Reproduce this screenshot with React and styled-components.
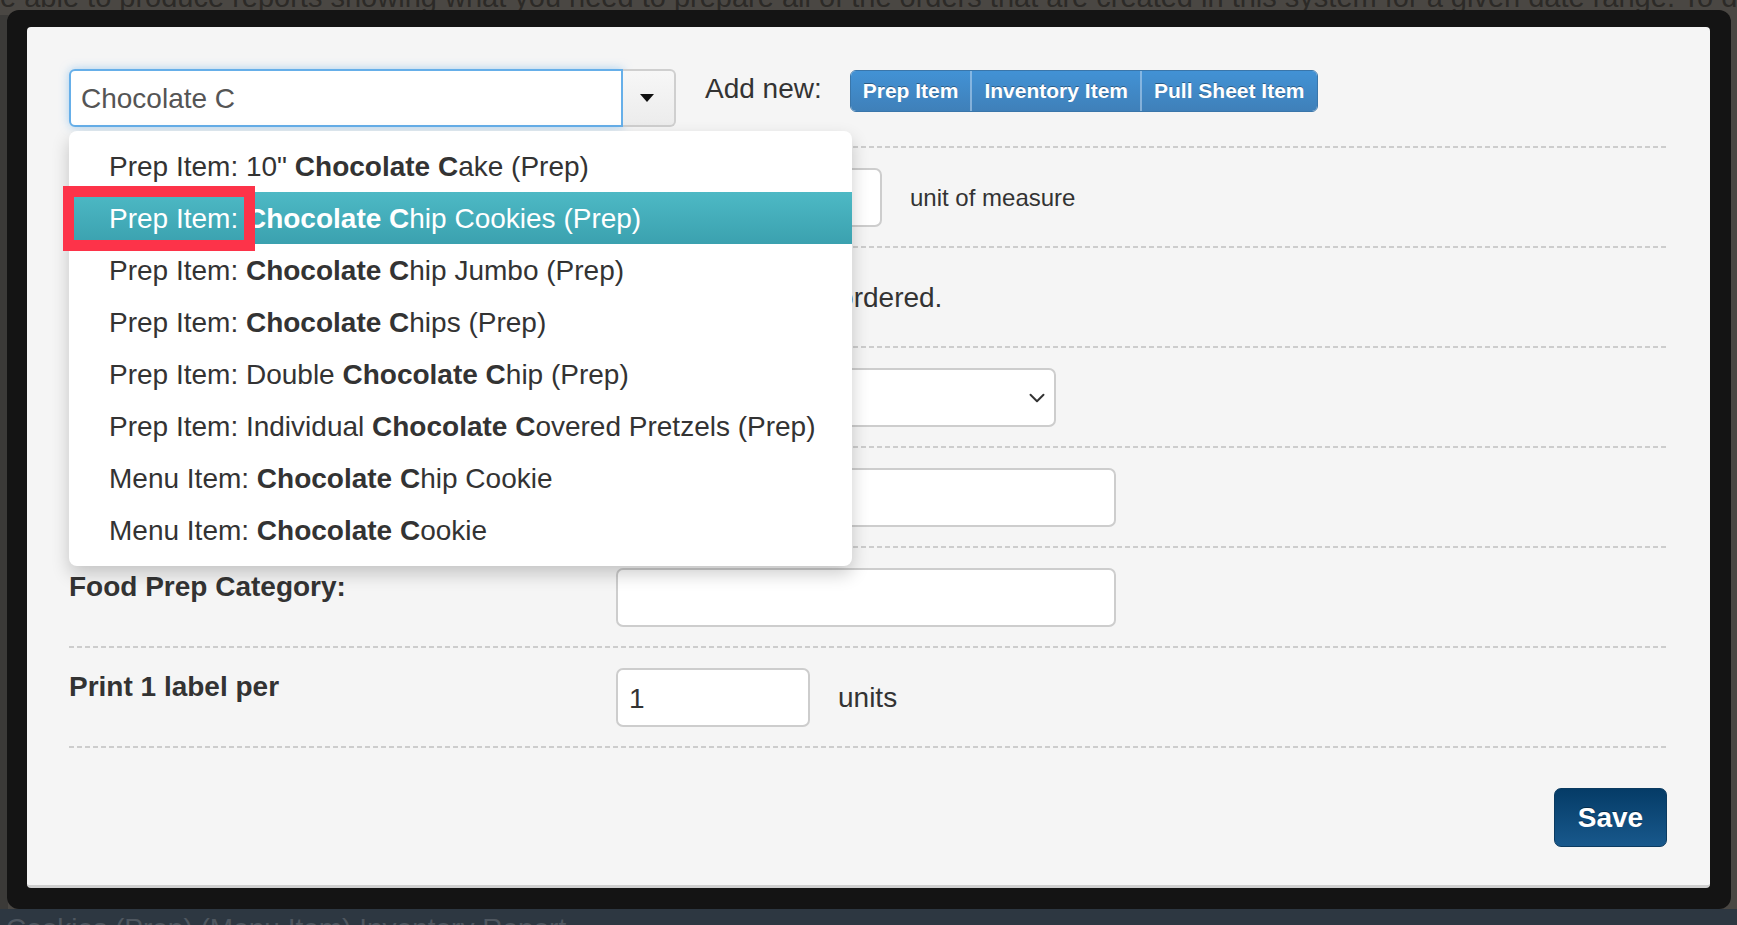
import React from "react";
import styled, { createGlobalStyle } from "styled-components";
import { ChevronDown } from "lucide-react";

const GlobalStyle = createGlobalStyle`
  * { box-sizing: border-box; }
  body {
    margin: 0;
    font-family: "Liberation Sans", Helvetica, Arial, sans-serif;
    background: #3e3c39;
  }
`;

const Page = styled.div`
  position: relative;
  width: 1737px;
  height: 925px;
  overflow: hidden;
  display: flex;
  flex-direction: column;
  background: #4a4743;
`;

const BackText = styled.p`
  margin: -21px 0 0 0;
  font-size: 29px;
  line-height: 36px;
  color: #2c2a27;
  white-space: nowrap;
`;

const Spacer = styled.div`
  flex: 1;
  background: linear-gradient(to right, #3b3a38 0 8px, transparent 8px);
`;

const BottomBar = styled.div`
  height: 16px;
  background: #2d3741;
  color: #4f5760;
  font-size: 28px;
  line-height: 40px;
  padding-left: 6px;
  overflow: hidden;
  white-space: nowrap;
`;

const Frame = styled.div`
  position: absolute;
  left: 7px;
  top: 10px;
  width: 1724px;
  height: 899px;
  background: #141414;
  border-radius: 12px;
  padding: 17px 21px 21px 20px;
`;

const Panel = styled.div`
  height: 100%;
  background: #f5f5f5;
  border-radius: 4px;
  border-bottom: 3px solid #cfcfcf;
  padding: 42px 43px 0 42px;
  color: #333;
`;

const TopRow = styled.div`
  display: flex;
  align-items: flex-start;
  height: 58px;
  margin-bottom: 19px;
`;

const Combo = styled.div`
  position: relative;
  display: flex;
`;

const ComboInput = styled.div`
  width: 554px;
  height: 58px;
  background: #fff;
  border: 2px solid #66afe9;
  border-radius: 6px 0 0 6px;
  box-shadow: 0 0 10px rgba(102, 175, 233, 0.55);
  padding-left: 10px;
  font-size: 28px;
  line-height: 56px;
  color: #555;
`;

const ComboToggle = styled.div`
  width: 53px;
  height: 58px;
  border: 2px solid #cfcfcf;
  border-left: none;
  border-radius: 0 6px 6px 0;
  background: linear-gradient(#f7f7f7, #ececec);
  display: flex;
  align-items: center;
  justify-content: center;
  &::after {
    content: "";
    border-left: 7px solid transparent;
    border-right: 7px solid transparent;
    border-top: 8px solid #111;
    margin-right: 4px;
  }
`;

const Menu = styled.ul`
  position: absolute;
  left: 0;
  top: 62px;
  width: 783px;
  margin: 0;
  padding: 9px 0 10px;
  list-style: none;
  background: #fff;
  border-radius: 8px;
  box-shadow: 0 8px 18px rgba(0, 0, 0, 0.2);
  z-index: 10;
`;

const MenuItem = styled.li`
  height: 52px;
  line-height: 54px;
  padding-left: 40px;
  font-size: 28px;
  white-space: nowrap;
  color: ${(p) => (p.$active ? "#fff" : "#333")};
  background: ${(p) => (p.$active ? "linear-gradient(#4db9c5, #3ba1af)" : "transparent")};
  b { font-weight: 700; }
`;

const Annotation = styled.div`
  position: absolute;
  left: -6px;
  top: 117px;
  width: 192px;
  height: 65px;
  border: 11px solid #fd3349;
  z-index: 11;
`;

const AddNew = styled.span`
  margin-left: 29px;
  font-size: 28px;
  line-height: 40px;
  color: #333;
`;

const BtnGroup = styled.div`
  display: flex;
  margin: 1px 0 0 28px;
  height: 42px;
  border: 1px solid #3a76aa;
  border-radius: 6px;
  overflow: hidden;
`;

const GroupBtn = styled.button`
  height: 100%;
  padding: 0 12px;
  border: none;
  border-left: ${(p) => (p.$first ? "none" : "2px solid rgba(190, 215, 240, 0.55)")};
  background: linear-gradient(#4292d5, #3f80b9);
  color: #fff;
  font-family: inherit;
  font-weight: 700;
  font-size: 21px;
  text-shadow: 0 -1px 0 rgba(0, 0, 0, 0.35);
`;

const Divider = styled.div`
  height: 2px;
  background: repeating-linear-gradient(to right, #cdcdcd 0 5px, transparent 5px 8px);
`;

const FormRow = styled.div`
  display: grid;
  grid-template-columns: 547px 1fr;
  align-items: start;
  height: 98px;
  padding-top: 20px;
`;

const Label = styled.div`
  font-size: 28px;
  font-weight: 700;
  line-height: 38px;
  color: #333;
`;

const Value = styled.div`
  display: flex;
  align-items: center;
  gap: 28px;
  height: 59px;
`;

const TextInput = styled.div`
  width: ${(p) => p.$w}px;
  height: 59px;
  background: #fff;
  border: 2px solid #cdcdcd;
  border-radius: 7px;
  padding-left: 11px;
  font-size: 28px;
  line-height: 57px;
  color: #333;
`;

const SelectBox = styled(TextInput)`
  display: flex;
  align-items: center;
  justify-content: flex-end;
  padding-right: 4px;
`;

const Unit = styled.span`
  font-size: ${(p) => p.$size || 28}px;
  margin-left: ${(p) => p.$indent || 0}px;
  color: #333;
`;

const Footer = styled.div`
  display: flex;
  justify-content: flex-end;
  padding-top: 40px;
`;

const SaveBtn = styled.button`
  width: 113px;
  height: 59px;
  border: 1px solid #0b3b61;
  border-radius: 7px;
  background: linear-gradient(#053c67, #18588c);
  color: #fff;
  font-family: inherit;
  font-weight: 700;
  font-size: 28px;
  text-shadow: 0 -1px 0 rgba(0, 0, 0, 0.4);
`;

const items = [
  { pre: "Prep Item: 10\" ", hit: "Chocolate C", post: "ake (Prep)" },
  { pre: "Prep Item: ", hit: "Chocolate C", post: "hip Cookies (Prep)", active: true },
  { pre: "Prep Item: ", hit: "Chocolate C", post: "hip Jumbo (Prep)" },
  { pre: "Prep Item: ", hit: "Chocolate C", post: "hips (Prep)" },
  { pre: "Prep Item: Double ", hit: "Chocolate C", post: "hip (Prep)" },
  { pre: "Prep Item: Individual ", hit: "Chocolate C", post: "overed Pretzels (Prep)" },
  { pre: "Menu Item: ", hit: "Chocolate C", post: "hip Cookie" },
  { pre: "Menu Item: ", hit: "Chocolate C", post: "ookie" },
];

export default function App() {
  return (
    <>
      <GlobalStyle />
      <Page>
        <BackText>
          e able to produce reports showing what you need to prepare all of the orders that are created in this system for a given date range. To do that, you need to tell us
        </BackText>
        <Spacer />
        <BottomBar>Cookies (Prep) (Menu Item) Inventory Report</BottomBar>

        <Frame>
          <Panel>
            <TopRow>
              <Combo>
                <ComboInput>Chocolate C</ComboInput>
                <ComboToggle />
                <Menu>
                  {items.map((it, i) => (
                    <MenuItem key={i} $active={it.active}>
                      {it.pre}
                      <b>{it.hit}</b>
                      {it.post}
                    </MenuItem>
                  ))}
                </Menu>
                <Annotation />
              </Combo>
              <AddNew>Add new:</AddNew>
              <BtnGroup>
                <GroupBtn $first>Prep Item</GroupBtn>
                <GroupBtn>Inventory Item</GroupBtn>
                <GroupBtn>Pull Sheet Item</GroupBtn>
              </BtnGroup>
            </TopRow>
            <Divider />

            <FormRow>
              <Label />
              <Value>
                <TextInput $w={266} />
                <Unit $size={24}>unit of measure</Unit>
              </Value>
            </FormRow>
            <Divider />

            <FormRow>
              <Label />
              <Value>
                <Unit $indent={12}>Make only when ordered.</Unit>
              </Value>
            </FormRow>
            <Divider />

            <FormRow>
              <Label />
              <Value>
                <SelectBox $w={440}>
                  <ChevronDown size={26} strokeWidth={1.8} color="#333" />
                </SelectBox>
              </Value>
            </FormRow>
            <Divider />

            <FormRow>
              <Label />
              <Value>
                <TextInput $w={500} />
              </Value>
            </FormRow>
            <Divider />

            <FormRow>
              <Label>Food Prep Category:</Label>
              <Value>
                <TextInput $w={500} />
              </Value>
            </FormRow>
            <Divider />

            <FormRow>
              <Label>Print 1 label per</Label>
              <Value>
                <TextInput $w={194}>1</TextInput>
                <Unit>units</Unit>
              </Value>
            </FormRow>
            <Divider />

            <Footer>
              <SaveBtn>Save</SaveBtn>
            </Footer>
          </Panel>
        </Frame>
      </Page>
    </>
  );
}
